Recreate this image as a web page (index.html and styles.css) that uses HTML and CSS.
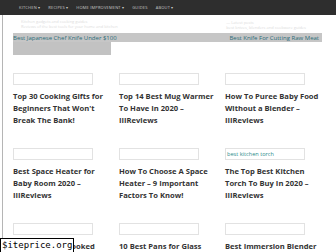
FILE: index.html
```html
<!DOCTYPE html>
<html lang="en">
<head>
  <meta charset="UTF-8" />
  <meta name="viewport" content="width=device-width, initial-scale=1.0"/>
  <title>IIIReviews</title>
  <link rel="stylesheet" href="styles.css">
</head>
<body>
  <nav class="nav">
    <span>Kitchen ▾</span>
    <span>Recipes ▾</span>
    <span>Home Improvement ▾</span>
    <span>Guides</span>
    <span>About ▾</span>
  </nav>

  <div class="page">
    <div class="faint">
      <div class="faint-left">
        <p>Kitchen gadgets and cooking guides</p>
        <p>Reviews of the best tools for your home and kitchen</p>
      </div>
      <div class="faint-right">
        <p>— Latest posts</p>
        <p>best knives, blenders and cookware guides</p>
      </div>
    </div>

    <div class="band">
      <a href="#">Best Japanese Chef Knife Under $100</a>
      <a href="#">Best Knife For Cutting Raw Meat</a>
    </div>
    <div class="band-block"></div>

    <div class="grid">
      <div class="card">
        <div class="thumb"></div>
        <h3>Top 30 Cooking Gifts for Beginners That Won't Break The Bank!</h3>
      </div>
      <div class="card">
        <div class="thumb"></div>
        <h3>Top 14 Best Mug Warmer To Have In 2020 – IIIReviews</h3>
      </div>
      <div class="card">
        <div class="thumb"></div>
        <h3>How To Puree Baby Food Without a Blender – IIIReviews</h3>
      </div>
      <div class="card">
        <div class="thumb"></div>
        <h3>Best Space Heater for Baby Room 2020 – IIIReviews</h3>
      </div>
      <div class="card">
        <div class="thumb"></div>
        <h3>How To Choose A Space Heater – 9 Important Factors To Know!</h3>
      </div>
      <div class="card">
        <div class="thumb">best kitchen torch</div>
        <h3>The Top Best Kitchen Torch To Buy In 2020 – IIIReviews</h3>
      </div>
      <div class="card">
        <div class="thumb"></div>
        <h3>Best Knife for Cooked Meat</h3>
      </div>
      <div class="card">
        <div class="thumb"></div>
        <h3>10 Best Pans for Glass Top Stoves</h3>
      </div>
      <div class="card">
        <div class="thumb"></div>
        <h3>Best Immersion Blender</h3>
      </div>
    </div>
  </div>

  <div class="watermark">$iteprice.org</div>
</body>
</html>
```

FILE: styles.css
```css
* {
  box-sizing: border-box;
}

body {
  margin: 0;
  padding: 0;
  font-family: "Open Sans", sans-serif;
  color: #333;
  background: #fff;
  overflow: hidden;
}

.nav {
  height: 15px;
  background: #2e2e2e;
  display: flex;
  align-items: center;
  gap: 8px;
  padding-left: 19px;
  font-size: 4px;
  text-transform: uppercase;
  color: #c8c8c8;
  letter-spacing: 0.2px;
}

.page {
  margin-left: 2px;
  border-left: 1px solid #b5b5b5;
  padding-left: 10px;
  height: 237px;
  overflow: hidden;
}

.faint {
  height: 18px;
  display: flex;
  justify-content: space-between;
  font-size: 4px;
  color: #dcdcdc;
}

.faint p {
  margin: 0;
  line-height: 5px;
}

.faint-left {
  padding: 4px 0 0 8px;
}

.faint-right {
  padding: 5px 30px 0 0;
}

.band {
  width: 309px;
  height: 9px;
  background: #c6c6c6;
  display: flex;
  justify-content: space-between;
  align-items: center;
  padding-right: 3px;
  font-size: 6px;
}

.band a {
  color: #2b6c78;
  text-decoration: none;
}

.band-block {
  width: 98px;
  height: 13px;
  background: #c2c2c2;
}

.grid {
  display: grid;
  grid-template-columns: repeat(3, 100px);
  column-gap: 6px;
  row-gap: 22px;
  margin-top: 18px;
}

.thumb {
  width: 80px;
  height: 12px;
  border: 1px solid #e2e2e2;
  font-size: 5.6px;
  color: #2b8a8a;
  padding-left: 1px;
  line-height: 10px;
}

.card h3 {
  width: 96px;
  margin: 5px 0 0;
  font-size: 7.6px;
  line-height: 12px;
  font-weight: 700;
  height: 36px;
}

.watermark {
  position: absolute;
  left: 0;
  top: 238px;
  width: 74px;
  height: 15px;
  background: #fff;
  border: 1px solid #000;
  font-family: "DejaVu Sans Mono", monospace;
  font-size: 9px;
  line-height: 13px;
  padding-left: 1px;
  color: #000;
}
```
